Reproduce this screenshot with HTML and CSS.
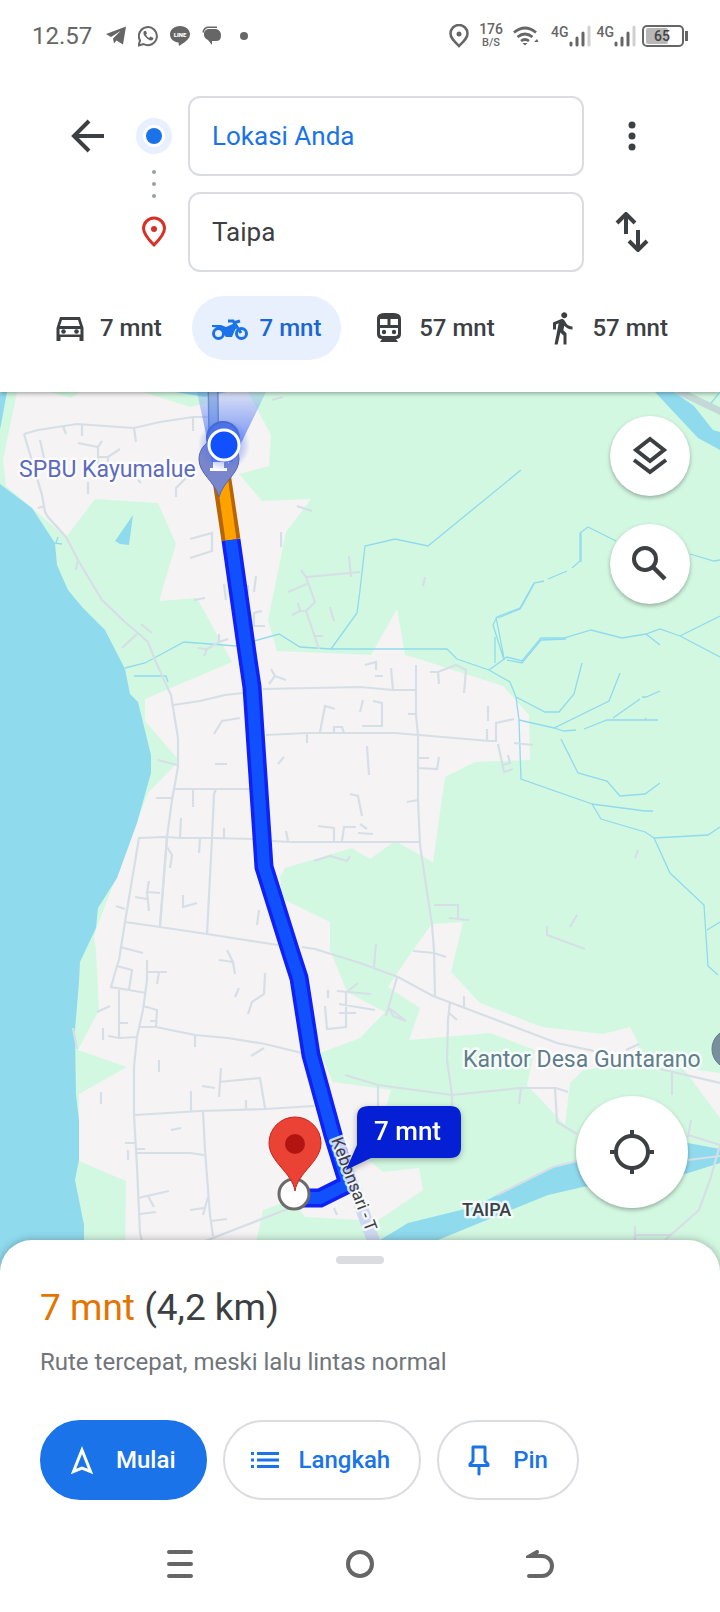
FILE: index.html
```html
<!DOCTYPE html>
<html lang="id">
<head>
    <meta charset="UTF-8">
    <meta name="viewport" content="width=device-width, initial-scale=1.0">
    <title>Rute ke Taipa</title>
    <link rel="stylesheet" href="styles.css">
</head>
<body>
    <div class="status-bar">
        <div class="status-group">
            <span class="clock">12.57</span>
            <svg width="20" height="20" viewBox="0 0 20 20" fill="#666"><path d="M0 8 20 0.500 17 18.500 10.500 14.500 8 17.500 7 12.500 14.500 5 5 11Z"/></svg>
            <svg width="20" height="22" viewBox="1 0 20 22"><path d="M1.500 20.500 3 15.500A9 9 0 1 1 6.500 19Z" fill="none" stroke="#666" stroke-width="2"/><path d="M7.500 6C5.500 7.500 6.500 10 9 12.500s5 4 7 2l.5-1.500-3-1.500-1.500 1.500C10.500 12 9.500 11 9 9.500l1-1L9 6Z" fill="#666"/></svg>
            <svg width="20" height="20" viewBox="0 0 20 20"><path d="M10 0C4 0 0 4 0 8.500S4 16 8.500 16.500L9 20c5-3 11-7 11-11.500S16 0 10 0Z" fill="#666"/><text x="10" y="11" class="line-mark">LINE</text></svg>
            <svg width="20" height="20" viewBox="0 0 20 20" fill="#666"><path d="M2 9V7q1-4 5-4h7q5 1 5 6.500T14 15h-4v4l-4-5Q2 12 2 9Z"/><path d="M1 6.500Q2 1 7 1.200h8" fill="none" stroke="#666" stroke-width="1.500"/></svg>
            <svg class="more-dot" width="8" height="8" viewBox="0 0 8 8"><circle cx="4" cy="4" r="4" fill="#666"/></svg>
        </div>
        <div class="status-group status-right">
            <svg width="20" height="24" viewBox="0 0 20 24"><path d="M10 22C5 17 1.500 14 1.500 9.500a8.500 8.500 0 0 1 17 0C18.500 14 15 17 10 22Z" fill="none" stroke="#666" stroke-width="2.500"/><circle cx="10" cy="10" r="2.500" fill="#666"/></svg>
            <span class="speed"><b>176</b><i>B/S</i></span>
            <svg class="wifi" width="26" height="20" viewBox="0 0 26 20" fill="none" stroke="#666" stroke-width="2.800"><path d="M1 6.500q11-9 22 0M4.500 11q7.500-6 15 0M8 15q4-3 8 0"/><path d="M9.500 17h5L12 19.500ZM21 16l3-3 1.500 3Z" fill="#666" stroke="none"/></svg>
            <span class="signal"><b>4G</b><svg width="22" height="22" viewBox="0 0 22 22" stroke="#666" stroke-width="3" stroke-linecap="round"><path d="M2 18v2M8 13v7M14 8v12"/><path d="M20 2v18" stroke="#d0d0d0"/></svg></span>
            <span class="signal"><b>4G</b><svg width="22" height="22" viewBox="0 0 22 22" stroke="#666" stroke-width="3" stroke-linecap="round"><path d="M2 18v2M8 13v7M14 8v12"/><path d="M20 2v18" stroke="#d0d0d0"/></svg></span>
            <svg width="46" height="24" viewBox="0 0 46 24"><rect x="1" y="2" width="40" height="20" rx="4" fill="none" stroke="#666" stroke-width="2"/><rect x="4" y="4" width="22" height="16" rx="2" fill="#b8b8b8"/><path d="M44.500 7v10" stroke="#666" stroke-width="3"/><text x="20" y="17" class="battery-text">65</text></svg>
        </div>
    </div>

    <header class="directions">
        <form class="route-form">
            <button type="button" class="icon-button" aria-label="Kembali">
                <svg width="36" height="36" viewBox="0 0 36 36" fill="none" stroke="#3c4043" stroke-width="4"><path d="M34 18H5M19 3 4 18l15 15"/></svg>
            </button>
            <div class="stops">
                <svg width="36" height="36" viewBox="0 0 36 36"><circle cx="18" cy="18" r="18" fill="#e8f0fe"/><circle cx="18" cy="18" r="11" fill="#fff"/><circle cx="18" cy="18" r="8" fill="#1a73e8"/></svg>
                <svg width="4" height="28" viewBox="0 0 4 28" fill="#9aa0a6"><circle cx="2" cy="2" r="2"/><circle cx="2" cy="14" r="2"/><circle cx="2" cy="26" r="2"/></svg>
                <svg width="36" height="36" viewBox="0 0 36 36"><path d="M18 31C12 25 7.500 20 7.500 14.500a10.500 10.500 0 0 1 21 0C28.500 20 24 25 18 31Z" fill="none" stroke="#d93025" stroke-width="3"/><circle cx="18" cy="15" r="3" fill="#d93025"/></svg>
            </div>
            <div class="fields">
                <input type="text" class="field field-origin" value="Lokasi Anda" aria-label="Titik awal">
                <input type="text" class="field" value="Taipa" aria-label="Tujuan">
            </div>
            <div class="form-actions">
                <button type="button" class="icon-button" aria-label="Opsi lainnya">
                    <svg width="36" height="36" viewBox="0 0 36 36" fill="#3c4043"><circle cx="18" cy="7" r="3.500"/><circle cx="18" cy="18" r="3.500"/><circle cx="18" cy="29" r="3.500"/></svg>
                </button>
                <button type="button" class="icon-button" aria-label="Tukar titik awal dan tujuan">
                    <svg width="40" height="40" viewBox="0 0 40 40" fill="none" stroke="#3c4043" stroke-width="4"><path d="M14 22V3M5 11l9-9 9 9M26 18v19M17 29l9 9 9-9"/></svg>
                </button>
            </div>
        </form>
        <nav class="modes">
            <button type="button" class="mode">
                <svg width="36" height="36" viewBox="0 0 36 36"><path d="M8 7h20l3.500 11v13h-4v-4h-19v4h-4V18ZM10 10 8 16h20l-2-6ZM7.500 19v5.500h21V19Z" fill="#3c4043" fill-rule="evenodd"/><circle cx="11.500" cy="21.500" r="2.300" fill="#3c4043"/><circle cx="24.500" cy="21.500" r="2.300" fill="#3c4043"/></svg>
                7 mnt
            </button>
            <button type="button" class="mode mode-active">
                <svg width="36" height="36" viewBox="0 0 36 36" fill="none" stroke="#1a73e8" stroke-width="3"><circle cx="6.500" cy="23.500" r="5"/><circle cx="29.500" cy="23.500" r="5"/><path d="M16 11h5l8 12M21 13l7-2"/><path d="M0 15h9l5 2 9-4 3 3-3 4-3 7h-6l-4-5q-3-5-10-5Z" fill="#1a73e8" stroke="none"/></svg>
                7 mnt
            </button>
            <button type="button" class="mode">
                <svg width="36" height="36" viewBox="0 0 36 36"><path d="M6 9c0-6 5-6 12-6s12 0 12 6v15q0 5-5 5l2 3H9l2-3q-5 0-5-5ZM9 9v6h7.500V9ZM19.500 9v6H27V9ZM9 18v5q0 3 3 3h12q3 0 3-3v-5Z" fill="#3c4043" fill-rule="evenodd"/><circle cx="13" cy="22" r="2.200" fill="#3c4043"/><circle cx="23" cy="22" r="2.200" fill="#3c4043"/></svg>
                57 mnt
            </button>
            <button type="button" class="mode">
                <svg width="36" height="36" viewBox="0 0 24 24" fill="#3c4043"><path d="M13.500 5.500c1.100 0 2-.9 2-2s-.9-2-2-2-2 .9-2 2 .9 2 2 2zM9.800 8.900 7 23h2.100l1.800-8 2.100 2v6h2v-7.500l-2.100-2 .6-3C14.800 12 16.800 13 19 13v-2c-1.900 0-3.500-1-4.300-2.400l-1-1.600c-.4-.6-1-1-1.700-1-.3 0-.5.1-.8.1L6 8.300V13h2V9.600l1.800-.7"/></svg>
                57 mnt
            </button>
        </nav>
    </header>

    <main class="map">
        <svg class="map-canvas" viewBox="0 392 720 880" preserveAspectRatio="xMidYMin slice">
            <defs>
                <linearGradient id="beam" x1="0" y1="1" x2="0" y2="0">
                    <stop offset="0" stop-color="#3f6cf5" stop-opacity="0.900"/>
                    <stop offset="1" stop-color="#3f6cf5" stop-opacity="0.150"/>
                </linearGradient>
                <radialGradient id="glow">
                    <stop offset="0.500" stop-color="#4a6ef5" stop-opacity="0.500"/>
                    <stop offset="1" stop-color="#4a6ef5" stop-opacity="0"/>
                </radialGradient>
            </defs>
            <rect y="392" width="720" height="880" fill="#d3f8e2"/>

            <!-- built-up areas -->
            <g fill="#f5f3f4">
                <path d="M17 392 3 460 6 486 32 508 52 525 66 537 95 499 158 503 176 544 159 601 197 598 232 662 145 699V721L177 758V763L148 793 97 927 94 937 96 950 99 1010 78 1050 127 1067 79 1094V1161L126 1181 125 1272H250L263 1210 292 1200 305 1217 360 1220 377 1221 423 1190 419 1168 383 1172 360 1153V1110L385 1112 391 1090 333 1082 320 1053 360 1038 385 1012 347 992 330 950V922L283 899 280 877 285 868 352 848 370 859 395 841 433 862 445 777 475 762 530 760 529 715 503 686 422 660 405 655 397 609 371 655 277 651 268 620 286 532 311 499 262 501 239 474 269 466 271 435 248 392H207V403L190 407 143 392H80L71 398 50 392Z"/>
                <path d="M413 950 388 987 420 1008 409 1040 490 1033 535 1050 527 1085 565 1125 570 1083 583 1070 640 1062 638 1043 630 1027 603 1034 542 1027 480 1003 451 972 463 922 432 924Z"/>
                <path d="M683 1068 720 1073V1118Z"/>
            </g>

            <!-- sea, rivers and ponds -->
            <g fill="#90daee">
                <path d="M0 484 32 508 55 543 57 565 68 590 83 608 105 630 125 669 130 694 138 702 151 755V773L137 823 117 878 98 908 96 928 80 962 79 982 75 1030 76 1095 79 1120V1160L75 1180 84 1225V1272H0Z"/>
                <path d="M0 392H7L0 430ZM175 392H226L205 397ZM133 515 115 541 120 544 129 545Z"/>
                <path d="M655 392H674L694 406 713 430 720 432V450L698 438Z"/>
                <path d="M300 1272 380 1240 408 1223 473 1207 497 1195 553 1167 577 1162 688 1143 720 1149V1163L685 1174 583 1187 548 1195 438 1240 360 1272Z"/>
            </g>
            <g fill="none" stroke="#90daee" stroke-width="1.300">
                <path d="M125 668 145 663 184 642 236 646 279 634 300 647 331 649H447L457 659 489 670 510 682 516 697 519 720 521 779 592 804 601 819 645 832 654 838 670 873 704 905 708 966 718 975"/>
                <path d="M592 804 645 811H653M654 838 708 835 720 827M707 930 720 922"/>
                <path d="M516 697 545 712H559L574 694 582 663M519 720 554 728 609 701 620 673M554 728 564 731 576 730M584 729 607 720H645L646 718M645 720H658M613 718 640 699M642 697H646L660 691M561 739 578 773 607 781 620 796 645 794 660 783"/>
                <path d="M134 676H166L168 682M331 649 357 613 360 590 365 546 395 539 428 546 521 470"/>
                <path d="M616 541 588 527 580 533V561L572 568M567 571 548 579M544 581 534 583 520 608 497 617 493 625 504 660M496 617 504 658M495 637V663M489 670 507 657 522 661 541 638H564L591 630 622 638 646 634 660 629 680 636 720 657M680 636 720 616M646 634 660 645"/>
                <path d="M507 660 522 663 541 640 566 639M534 584 522 606 520 609 498 618M581 533V562M690 554 714 561 720 560M708 407 720 392M55 543 62 544M58 537 56 543"/>
            </g>

            <!-- streets -->
            <path d="M676 390 722 412" stroke="#c3d9d8" stroke-width="7"/>
            <g fill="none" stroke="#d6dfe6" stroke-width="2.200">
                <path d="M24 434 38 430 77 424 134 428 160 422 193 417H213M24 434 42 495 45 512 48 517 66 537 78 560 102 600 125 622 138 633 148 642 155 660 171 695 178 738V767L172 800 167 837 160 927"/>
                <path d="M63 426l3 8M82 425v11M134 428l2 14M193 417v14M40 440l4 18M78 443l20 4 4-6M98 447v20M98 457h10l12-8M108 457v8M88 482v12M176 497v-9l10-10M38 508l7-2M78 560l-2 10M122 648l16-15M141 624l11 9M138 480l3 3"/>
                <path d="M190 539 212 533V551L190 558M281 532V547M297 506 312 511M272 400 283 397M224 584 226 600M248 585V594M256 576 254 592M262 611 254 613V626H265M194 600 205 598M198 648 207 649 219 642 228 639M219 634V642M207 649 204 656"/>
                <path d="M301 570 306 577 360 572M349 556 351 577M288 592 307 584M306 577 315 602 306 611H300L292 615M298 603 300 611M306 611 319 649M315 636H323M330 607 334 621M425 577 423 586M365 665 376 662V670"/>
                <path d="M173 705 200 701 225 695 243 693M263 689 360 687 393 690H416M271 669 275 676 269 684M275 676 286 680M214 734 222 721 240 718M215 764H227M158 760 177 765"/>
                <path d="M320 732 325 706 335 709M334 732V727H342L344 733M307 733V743M278 764 284 757M266 735 307 733H395L490 741H496V723L514 719M175 789H250M193 789V807M156 798H172M216 789 214 794 212 838 207 934M181 818 180 838M224 828V838"/>
                <path d="M160 925 167 837 139 838 125 922 119 960M167 837 180 838H212L254 839M272 841 290 842H420M167 847 172 855 170 868M200 839 199 853M286 831 288 841M149 881 147 892 149 911M147 892 160 893M135 897 147 899M116 906 125 909M183 895V907L197 903M259 910 257 925"/>
                <path d="M125 922 160 927 207 934 278 945M302 947 315 949 360 963 398 977 433 996 449 1002 557 1043 594 1051M120 947 143 953M314 861 330 856 347 861 350 856"/>
                <path d="M318 826 334 828V842M342 841 344 827H356M350 794 358 796 362 816M360 824 367 829M358 833 373 834M416 665V715L418 735V800L420 845 432 925 434 950 435 997M375 676H383M391 668 393 690M430 672H438L456 665 466 670 464 693M438 672 439 684M488 706V721M408 714H416M363 700 360 712M373 701 382 703V726H362M367 746 369 775M418 758H429M418 768 437 769 439 757"/>
                <path d="M487 729V741M514 743 533 745M498 744 503 767 504 772 513 769M503 765 510 763 508 755M407 802 418 800M434 905H458V918M449 918 469 920M413 951 434 953 446 957M547 926V935L585 949M570 927 577 915M635 858 638 850M376 944 374 967"/>
                <path d="M119 960 117 966 132 970 129 990 111 987 117 966M129 990 146 993M147 960V980L143 1010 137 1037 134 1067V1115L137 1167 140 1233 143 1245M148 972H167M159 972 157 984M119 990V1038M119 1023H128M97 1012 110 1006M103 1028V1040M108 1036 119 1038 137 1037M143 1006 157 1010 156 1027M150 1021H157M73 1028 77 1049"/>
                <path d="M139 1027H156L195 1035 228 1038 265 1044 302 1053M195 1035V1047M251 1056 264 1048M159 1060V1072M101 1092V1104M227 950 233 962 235 974M219 960 233 962M239 988 235 997M265 973 264 994 252 1002 248 1014"/>
                <path d="M135 1115 200 1111 265 1109 314 1106M191 1091V1111M221 1068 219 1097M219 1082 260 1078 265 1108M202 1086 215 1088M246 1100V1109M203 1111 205 1150 210 1215 213 1236M136 1153H190L204 1155M171 1130 181 1128M125 1143H135M135 1149H145M128 1150V1160M138 1198 169 1191M148 1196 154 1207M140 1214 156 1212M208 1197 203 1215M190 1210 204 1208M211 1221 227 1219M200 1243 290 1208"/>
                <path d="M328 990V998M325 1006 327 1029 346 1027V992M337 991 371 994M347 992 358 983M339 1004 375 1010M339 1013H356M345 1075 378 1085 452 1095 520 1088H556L568 1092M378 1085V1109M521 1088 519 1104M555 1088 557 1122 577 1134M397 977 386 1016M389 1008 406 1021 393 1016ZM450 1002 448 1020 447 1060 452 1095V1108M448 1012 457 1020M464 996V1008M626 1050 639 1044M660 1069 720 1083M672 1073V1095M691 1120 688 1137M688 1135 720 1145M497 1195 553 1167 577 1161M688 1160 720 1156M720 1145 710 1180 699 1210 665 1240M635 1226V1242M635 1235H670M334 1208 337 1215"/>
            </g>

            <!-- continuing road and route -->
            <path d="M213 388 214 450" stroke="#7b96b8" stroke-width="11"/>
            <path d="M213 388 214 450" stroke="#abc4e0" stroke-width="8"/>
            <g fill="none">
                <path d="M346 1165 375 1245" stroke="#cdd9f0" stroke-width="13"/>
                <path d="M216 440 231 540" stroke="#b86400" stroke-width="19"/>
                <path d="M217 440 231 540" stroke="#ffa200" stroke-width="11"/>
                <path d="M231 540 248 660 252 687 264 867 290 950 299 978 311 1055 333 1135 348 1184 320 1198 300 1198" stroke="#1021f5" stroke-width="19"/>
                <path d="M231 540 248 660 252 687 264 867 290 950 299 978 311 1055 333 1135 348 1184 320 1198 300 1198" stroke="#1050ff" stroke-width="12"/>
            </g>

            <!-- places -->
            <circle cx="223" cy="438" r="16" fill="#5f7fc0" stroke="#4966a8" stroke-width="2"/>
            <path d="M219 497C214 480 199 474 199 459a20 20 0 0 1 40 0C239 474 224 480 219 497Z" fill="#7986cb" stroke="#5566b5"/>
            <path d="M210 471v-3h3v-12h11v12h3v3ZM225 456l4 4v4" fill="#fff"/>
            <path d="M197 392H266L232 462H212Z" fill="url(#beam)"/>
            <circle cx="224" cy="445" r="26" fill="url(#glow)"/>
            <circle cx="224" cy="445" r="15" fill="#1050ff" stroke="#fff" stroke-width="3"/>
            <circle cx="732" cy="1049" r="20" fill="#78909c" stroke="#607d8b"/>
            <text x="19" y="477" class="map-label label-fuel">SPBU Kayumalue</text>
            <text x="463" y="1067" class="map-label label-office">Kantor Desa Guntarano</text>
            <text x="462" y="1216" class="map-label label-town">TAIPA</text>
            <text transform="translate(331 1140) rotate(69)" class="map-label label-road">Kebonsari - T</text>

            <!-- destination -->
            <circle cx="294" cy="1194" r="15" fill="#fff" stroke="#6b6b6b" stroke-width="3"/>
            <path d="M295 1191C292 1172 269 1162 269 1143a26 26 0 0 1 52 0C321 1162 298 1172 295 1191Z" fill="#ea4335" stroke="#c5221f"/>
            <circle cx="295" cy="1144" r="10" fill="#b31412"/>

            <g class="eta">
                <path d="M369 1106H450Q461 1106 461 1117V1147Q461 1158 450 1158H371L346 1170 357 1145V1117Q357 1106 369 1106Z" fill="#041fd4"/>
                <text x="374" y="1140">7 mnt</text>
            </g>
        </svg>

        <div class="map-tools">
            <button type="button" class="round-button" aria-label="Lapisan peta">
                <svg width="40" height="40" viewBox="0 0 40 40" fill="none" stroke="#3c4043" stroke-width="4"><path d="M20 3 34 14 20 25 6 14ZM4 24 20 36 36 24"/></svg>
            </button>
            <button type="button" class="round-button" aria-label="Telusuri di sepanjang rute">
                <svg width="40" height="40" viewBox="0 0 40 40" fill="none" stroke="#3c4043" stroke-width="4"><circle cx="15" cy="15" r="11"/><path d="m23 23 12 12" stroke-width="4.500"/></svg>
            </button>
        </div>
        <button type="button" class="round-button locate-button" aria-label="Lokasi saya">
            <svg width="44" height="44" viewBox="0 0 44 44" fill="none" stroke="#3c4043" stroke-width="4"><circle cx="22" cy="22" r="16"/><path d="M22 0v6M22 38v6M0 22h6M38 22h6"/></svg>
        </button>
    </main>

    <section class="sheet">
        <div class="handle"></div>
        <h1 class="summary"><span class="duration">7 mnt</span> (4,2 km)</h1>
        <p class="note">Rute tercepat, meski lalu lintas normal</p>
        <div class="actions">
            <button type="button" class="action action-primary">
                <svg width="36" height="36" viewBox="0 0 36 36" fill="none" stroke="#fff" stroke-width="3"><path d="M18 8 9.500 29.500 18 26l8.500 3.500Z"/></svg>
                Mulai
            </button>
            <button type="button" class="action">
                <svg width="36" height="36" viewBox="0 0 36 36" stroke="#1a73e8" stroke-width="3"><path d="M4 11.500h3M4 18h3M4 24.500h3M10 11.500h22M10 18h22M10 24.500h22"/></svg>
                Langkah
            </button>
            <button type="button" class="action">
                <svg width="36" height="36" viewBox="0 0 36 36" fill="none" stroke="#1a73e8" stroke-width="3" stroke-linecap="round" stroke-linejoin="round"><path d="M12 5h12v14l3 3v1.500H9V22l3-3ZM18 24v8"/></svg>
                Pin
            </button>
        </div>
    </section>

    <nav class="system-nav">
        <button type="button" class="icon-button" aria-label="Aplikasi terbaru">
            <svg width="28" height="28" viewBox="0 0 28 28" stroke="#666" stroke-width="4" stroke-linecap="round"><path d="M3 2h22M3 14h22M3 26h22"/></svg>
        </button>
        <button type="button" class="icon-button" aria-label="Beranda">
            <svg width="28" height="28" viewBox="0 0 28 28" fill="none" stroke="#666" stroke-width="4"><circle cx="14" cy="14" r="12"/></svg>
        </button>
        <button type="button" class="icon-button" aria-label="Kembali">
            <svg width="28" height="28" viewBox="0 0 28 28" fill="none" stroke="#666" stroke-width="4" stroke-linecap="round"><path d="M3 26h13a10 10 0 0 0 0-20H4l7-4"/></svg>
        </button>
    </nav>
</body>
</html>
```
FILE: styles.css
```css
* {
    margin: 0;
    padding: 0;
    box-sizing: border-box;
}

body {
    min-height: 100vh;
    display: flex;
    flex-direction: column;
    background: #fff;
    color: #3c4043;
    font-family: Roboto, "Liberation Sans", sans-serif;
}

button {
    border: none;
    background: none;
    font: inherit;
    color: inherit;
    cursor: pointer;
}

svg {
    display: block;
    flex-shrink: 0;
}

/* Status bar */
.status-bar {
    position: relative;
    z-index: 2;
    height: 72px;
    padding: 0 32px;
    display: flex;
    justify-content: space-between;
    align-items: center;
    background: #fff;
    color: #666;
}

.status-group {
    display: flex;
    align-items: center;
    gap: 12px;
}

.status-right {
    gap: 6px;
}

.clock {
    font-size: 24px;
    margin-right: 2px;
}

.more-dot {
    margin-left: 6px;
}

.line-mark {
    fill: #fff;
    font-size: 6px;
    font-weight: 900;
    text-anchor: middle;
}

.speed {
    display: flex;
    flex-direction: column;
    align-items: center;
    margin: 0 4px;
    line-height: 13px;
}

.speed b {
    font-size: 14px;
    font-weight: 500;
}

.speed i {
    font-size: 11px;
    font-style: normal;
    font-weight: 500;
}

.wifi {
    margin-right: 6px;
}

.signal {
    display: flex;
}

.signal b {
    font-size: 14px;
    line-height: 14px;
    font-weight: 500;
}

.battery-text {
    fill: #444;
    font-size: 14px;
    font-weight: 500;
    text-anchor: middle;
}

/* Directions header */
.directions {
    position: relative;
    z-index: 1;
    padding: 24px 32px 32px;
    background: #fff;
    box-shadow: 0 1px 5px rgba(0, 0, 0, 0.4);
}

.route-form {
    display: flex;
    padding: 0 32px;
    margin-bottom: 24px;
}

.icon-button {
    width: 48px;
    height: 80px;
    display: flex;
    justify-content: center;
    align-items: center;
}

.stops {
    display: flex;
    flex-direction: column;
    justify-content: space-between;
    align-items: center;
    padding: 22px 0;
    margin: 0 16px 0 24px;
}

.fields {
    flex: 1;
    min-width: 0;
    display: flex;
    flex-direction: column;
    gap: 16px;
}

.field {
    width: 100%;
    height: 80px;
    padding: 0 22px;
    border: 2px solid #dadce0;
    border-radius: 12px;
    background: #fff;
    color: #3c4043;
    font-family: inherit;
    font-size: 26px;
}

.field-origin {
    color: #1a73e8;
}

.form-actions {
    display: flex;
    flex-direction: column;
    gap: 16px;
    margin-left: 24px;
}

.modes {
    display: flex;
    justify-content: space-between;
}

.mode {
    height: 64px;
    padding: 0 20px;
    display: flex;
    align-items: center;
    gap: 12px;
    border-radius: 32px;
    font-size: 24px;
    font-weight: 500;
    white-space: nowrap;
}

.mode-active {
    background: #e8f0fe;
    color: #1967d2;
}

/* Map */
.map {
    position: relative;
    flex: 1;
    min-height: 560px;
    margin-bottom: -32px;
    background: #d3f8e2;
    overflow: hidden;
}

.map-canvas {
    position: absolute;
    inset: 0;
    width: 100%;
    height: 100%;
}

.map-label {
    font-size: 23px;
    paint-order: stroke;
    stroke: rgba(255, 255, 255, 0.8);
    stroke-width: 5px;
    stroke-linejoin: round;
}

.label-fuel {
    fill: #5c6bc0;
}

.label-office {
    fill: #607d8b;
}

.label-town {
    fill: #3c4043;
    font-size: 18px;
    font-weight: 500;
}

.label-road {
    fill: #3c4043;
    font-size: 17px;
}

.eta {
    filter: drop-shadow(0 2px 3px rgba(0, 0, 0, 0.3));
}

.eta text {
    fill: #fff;
    font-size: 26px;
    font-weight: 500;
}

.map-tools {
    position: absolute;
    top: 24px;
    right: 30px;
    display: flex;
    flex-direction: column;
    gap: 28px;
}

.round-button {
    width: 80px;
    height: 80px;
    display: flex;
    justify-content: center;
    align-items: center;
    border-radius: 50%;
    background: #fff;
    box-shadow: 0 2px 4px rgba(0, 0, 0, 0.3);
}

.locate-button {
    position: absolute;
    right: 32px;
    bottom: 64px;
    width: 112px;
    height: 112px;
}

/* Bottom sheet */
.sheet {
    position: relative;
    padding: 16px 40px;
    border-radius: 32px 32px 0 0;
    background: #fff;
    box-shadow: 0 0 8px rgba(0, 0, 0, 0.3);
}

.handle {
    width: 48px;
    height: 8px;
    margin: 0 auto 20px;
    border-radius: 4px;
    background: #dadce0;
}

.summary {
    font-size: 37px;
    line-height: 48px;
    font-weight: 400;
}

.duration {
    color: #e37400;
}

.note {
    margin: 12px 0 40px;
    color: #70757a;
    font-size: 24px;
    line-height: 36px;
}

.actions {
    display: flex;
    flex-wrap: wrap;
    gap: 16px;
}

.action {
    height: 80px;
    padding: 0 29px 0 22px;
    display: flex;
    align-items: center;
    gap: 16px;
    border: 2px solid #dadce0;
    border-radius: 40px;
    color: #1a73e8;
    font-size: 24px;
    font-weight: 500;
}

.action-primary {
    border-color: #1a73e8;
    background: #1a73e8;
    color: #fff;
}

/* System navigation */
.system-nav {
    position: relative;
    height: 96px;
    padding: 0 12.5%;
    display: flex;
    justify-content: space-around;
    align-items: center;
    background: #fff;
}
```
